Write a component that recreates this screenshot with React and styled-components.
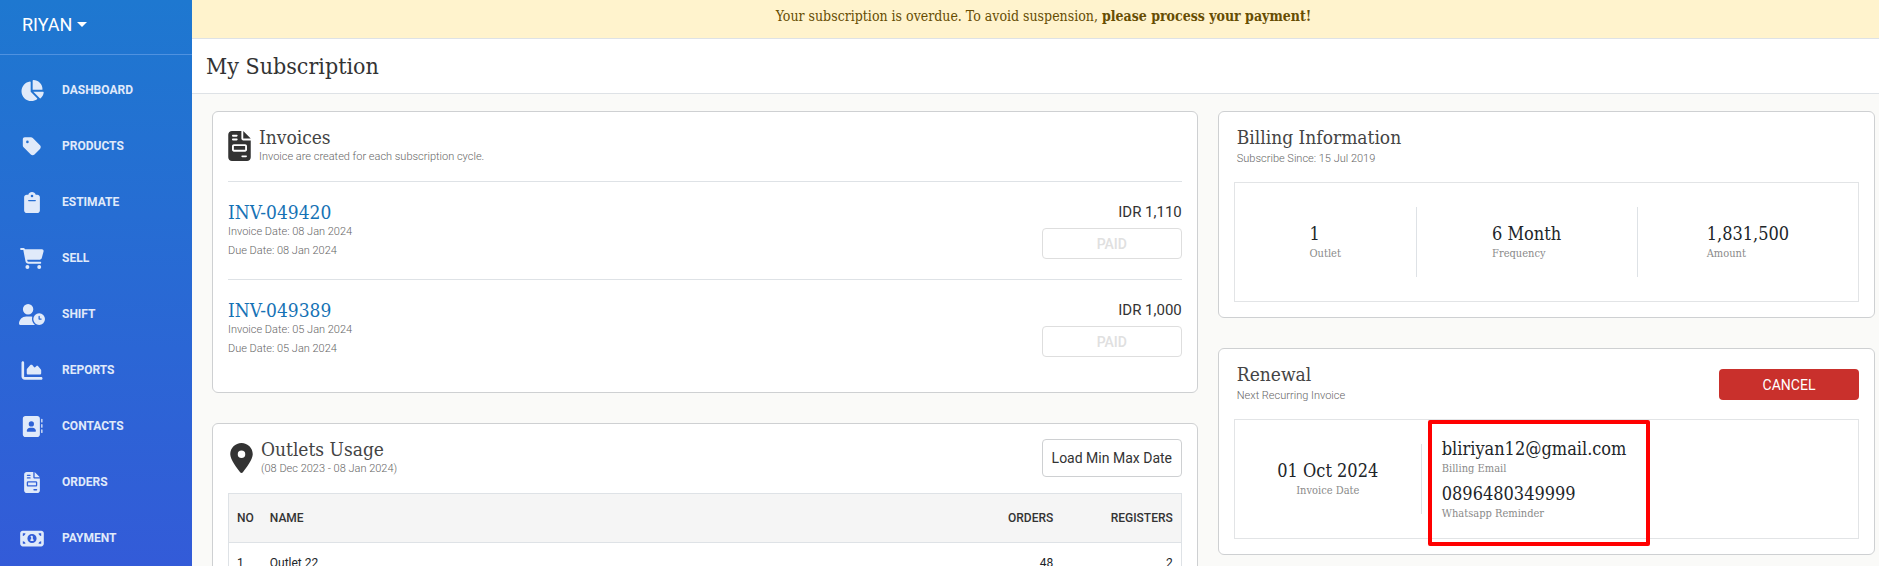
import React from 'react'
import styled, { createGlobalStyle } from 'styled-components';
import {
    FaChartPie, FaTag, FaClipboard, FaCartShopping, FaUserClock, FaChartArea,
    FaAddressBook, FaFileInvoice, FaMoneyBill1, FaLocationDot
} from 'react-icons/fa6';

const menu = [
    { label: 'DASHBOARD', icon: FaChartPie },
    { label: 'PRODUCTS', icon: FaTag },
    { label: 'ESTIMATE', icon: FaClipboard },
    { label: 'SELL', icon: FaCartShopping },
    { label: 'SHIFT', icon: FaUserClock },
    { label: 'REPORTS', icon: FaChartArea },
    { label: 'CONTACTS', icon: FaAddressBook },
    { label: 'ORDERS', icon: FaFileInvoice },
    { label: 'PAYMENT', icon: FaMoneyBill1 },
];

const invoices = [
    { no: 'INV-049420', date: '08 Jan 2024', due: '08 Jan 2024', total: 'IDR 1,110' },
    { no: 'INV-049389', date: '05 Jan 2024', due: '05 Jan 2024', total: 'IDR 1,000' },
];

const billing = [
    { value: '1', label: 'Outlet' },
    { value: '6 Month', label: 'Frequency' },
    { value: '1,831,500', label: 'Amount' },
];

const outlets = [
    { name: 'Outlet 22', orders: 48, registers: 2 },
];

export default function App() {
    return (
        <Page>
            <GlobalStyle />
            <Sidebar>
                <Account type="button">RIYAN <Caret /></Account>
                <Menu>
                    {menu.map(({ label, icon: Icon }) => (
                        <MenuLink href="#" key={label}>
                            <MenuIcon><Icon /></MenuIcon>
                            {label}
                        </MenuLink>
                    ))}
                </Menu>
            </Sidebar>
            <Main>
                <Alert>
                    Your subscription is overdue. To avoid suspension, <b>please process your payment!</b>
                </Alert>
                <TitleBar>
                    <h1>My Subscription</h1>
                </TitleBar>
                <Columns>
                    <Column>
                        <InvoiceCard />
                        <OutletCard />
                    </Column>
                    <Column>
                        <BillingCard />
                        <RenewalCard />
                    </Column>
                </Columns>
            </Main>
        </Page>
    )
}

function InvoiceCard() {
    return (
        <Card>
            <CardHead>
                <HeadIcon><FaFileInvoice /></HeadIcon>
                <div>
                    <CardTitle>Invoices</CardTitle>
                    <Small>Invoice are created for each subscription cycle.</Small>
                </div>
            </CardHead>
            {invoices.map((inv) => (
                <Invoice key={inv.no}>
                    <div>
                        <InvoiceLink href="#">{inv.no}</InvoiceLink>
                        <Small $line={19}>Invoice Date: {inv.date}</Small>
                        <Small $line={19}>Due Date: {inv.due}</Small>
                    </div>
                    <InvoiceTotal>
                        {inv.total}
                        <PaidButton type="button" disabled>PAID</PaidButton>
                    </InvoiceTotal>
                </Invoice>
            ))}
        </Card>
    )
}

function OutletCard() {
    return (
        <Card>
            <CardHead>
                <PinIcon><FaLocationDot /></PinIcon>
                <div>
                    <CardTitle>Outlets Usage</CardTitle>
                    <Small>(08 Dec 2023 - 08 Jan 2024)</Small>
                </div>
                <LoadButton type="button">Load Min Max Date</LoadButton>
            </CardHead>
            <Table>
                <thead>
                    <tr>
                        <Th $width={32}>NO</Th>
                        <Th>NAME</Th>
                        <Th $width={120} $right>ORDERS</Th>
                        <Th $width={120} $right>REGISTERS</Th>
                    </tr>
                </thead>
                <tbody>
                    {outlets.map((o, i) => (
                        <tr key={o.name}>
                            <Td>{i + 1}</Td>
                            <Td>{o.name}</Td>
                            <Td $right>{o.orders}</Td>
                            <Td $right>{o.registers}</Td>
                        </tr>
                    ))}
                </tbody>
            </Table>
        </Card>
    )
}

function BillingCard() {
    return (
        <Card>
            <SideHead>
                <div>
                    <CardTitle>Billing Information</CardTitle>
                    <Small $line={20}>Subscribe Since: 15 Jul 2019</Small>
                </div>
            </SideHead>
            <Box>
                {billing.map((item) => (
                    <Cell key={item.label}>
                        <div>
                            <Value>{item.value}</Value>
                            <Caption>{item.label}</Caption>
                        </div>
                    </Cell>
                ))}
            </Box>
        </Card>
    )
}

function RenewalCard() {
    return (
        <Card>
            <SideHead>
                <div>
                    <CardTitle>Renewal</CardTitle>
                    <Small $line={20}>Next Recurring Invoice</Small>
                </div>
                <CancelButton type="button">CANCEL</CancelButton>
            </SideHead>
            <Box>
                <DateCell>
                    <Value>01 Oct 2024</Value>
                    <Caption>Invoice Date</Caption>
                </DateCell>
                <Contact>
                    <Value>bliriyan12@gmail.com</Value>
                    <Caption>Billing Email</Caption>
                    <Value $top={5}>0896480349999</Value>
                    <Caption>Whatsapp Reminder</Caption>
                    <Highlight />
                </Contact>
            </Box>
        </Card>
    )
}

const slab = '"Roboto Slab", "DejaVu Serif Condensed", "DejaVu Serif", serif';

const GlobalStyle = createGlobalStyle`
    * {
        box-sizing: border-box;
    }
    body {
        margin: 0;
        background: #fafaf8;
        color: #212529;
        font-family: Roboto, sans-serif;
        overflow: hidden;
    }
    h1, h2 {
        margin: 0;
        font-weight: 400;
    }
    button {
        font-family: inherit;
    }
    a {
        text-decoration: none;
    }
`

const Page = styled.div`
    display: flex;
    height: 100vh;
`

const Sidebar = styled.aside`
    flex: 0 0 192px;
    background: linear-gradient(180deg, #1e78d0, #335bd8);
    overflow: hidden;
`

const Account = styled.button`
    display: flex;
    align-items: center;
    gap: 5px;
    width: 100%;
    height: 55px;
    padding: 0 22px 6px;
    border: 0;
    border-bottom: 1px solid #4f92e0;
    background: transparent;
    color: #fff;
    font-size: 18px;
`

const Caret = styled.span`
    border: 5px solid transparent;
    border-top-color: #fff;
    border-bottom: 0;
`

const Menu = styled.nav`
    padding-top: 7px;
`

const MenuLink = styled.a`
    display: flex;
    align-items: center;
    gap: 17px;
    height: 56px;
    padding-left: 19px;
    color: #e0eafa;
    font-size: 12px;
    font-weight: 700;
`

const MenuIcon = styled.span`
    display: flex;
    width: 26px;

    svg {
        width: 26px;
        height: 21px;
    }
`

const Main = styled.main`
    flex: 1;
    min-width: 0;
    overflow: hidden;
`

const Alert = styled.div`
    height: 39px;
    padding-left: 16px;
    border-bottom: 1px solid #dee2e6;
    background: #fff3cd;
    color: #664d03;
    font-family: ${slab};
    font-size: 14px;
    line-height: 32px;
    text-align: center;
`

const TitleBar = styled.header`
    display: flex;
    align-items: center;
    height: 55px;
    padding: 0 14px;
    border-bottom: 1px solid #dee2e6;
    background: #fff;
    color: #333;

    h1 {
        font-family: ${slab};
        font-size: 23px;
    }
`

const Columns = styled.div`
    display: grid;
    grid-template-columns: 3fr 2fr;
    gap: 20px;
    align-items: start;
    padding: 17px 4px 0 20px;
`

const Column = styled.div`
    display: flex;
    flex-direction: column;
    gap: 30px;
    min-width: 0;
`

const Card = styled.section`
    padding: 15px;
    border: 1px solid #ced0d2;
    border-radius: 6px;
    background: #fff;
`

const CardHead = styled.header`
    display: flex;
    gap: 8px;
    height: 54px;
`

const SideHead = styled(CardHead)`
    justify-content: space-between;
    height: 55px;
    padding-left: 3px;
`

const HeadIcon = styled.span`
    padding-top: 4px;
    color: #333;

    svg {
        display: block;
        width: 23px;
        height: 30px;
    }
`

const PinIcon = styled(HeadIcon)`
    padding-left: 2px;
`

const CardTitle = styled.h2`
    padding-bottom: 2px;
    color: #444;
    font-family: ${slab};
    font-size: 19px;
    line-height: 20px;
`

const Small = styled.div`
    color: #666;
    font-size: 11px;
    font-weight: 300;
    line-height: ${(p) => p.$line || 16}px;
`

const Invoice = styled.div`
    display: flex;
    justify-content: space-between;
    height: 98px;
    padding-top: 20px;
    border-top: 1px solid #dee2e6;
`

const InvoiceLink = styled.a`
    display: block;
    color: #1672b5;
    font-family: ${slab};
    font-size: 19px;
    line-height: 20px;
`

const InvoiceTotal = styled.div`
    display: flex;
    flex-direction: column;
    align-items: flex-end;
    gap: 6px;
    color: #333;
    font-size: 15px;
    line-height: 20px;
`

const BaseButton = styled.button`
    width: 140px;
    height: 31px;
    padding: 0;
    border-radius: 4px;
    font-size: 14px;
`

const PaidButton = styled(BaseButton)`
    border: 1px solid #dedede;
    background: #fff;
    color: #e0e0e0;
    font-weight: 500;
`

const CancelButton = styled(BaseButton)`
    margin-top: 5px;
    border: 0;
    background: #c9302c;
    color: #fff;
`

const LoadButton = styled(BaseButton)`
    height: 38px;
    margin-left: auto;
    border: 1px solid #ced0d2;
    background: #fff;
    color: #333;
`

const Table = styled.table`
    width: 100%;
    border: 1px solid #dee2e6;
    border-collapse: collapse;
    font-size: 12px;
`

const Th = styled.th`
    width: ${(p) => (p.$width ? p.$width + 'px' : 'auto')};
    height: 49px;
    padding: 0 8px;
    border-bottom: 1px solid #dee2e6;
    background: #f5f5f5;
    color: #333;
    font-weight: 500;
    text-align: ${(p) => (p.$right ? 'right' : 'left')};
`

const Td = styled.td`
    height: 40px;
    padding: 0 8px;
    text-align: ${(p) => (p.$right ? 'right' : 'left')};
`

const Box = styled.div`
    display: flex;
    align-items: center;
    height: 120px;
    border: 1px solid #e2e4e6;
`

const Cell = styled.div`
    display: flex;
    flex: 1;
    align-items: center;
    justify-content: center;
    height: 70px;

    &:first-child {
        flex: 0 0 29%;
    }

    & + & {
        border-left: 1px solid #dee2e6;
    }
`

const DateCell = styled.div`
    display: flex;
    flex: 0 0 30%;
    flex-direction: column;
    align-items: center;
    justify-content: center;
    height: 70px;
    border-right: 1px solid #dee2e6;
`

const Contact = styled.div`
    position: relative;
    padding: 0 20px;
`

const Value = styled.div`
    margin-top: ${(p) => p.$top || 0}px;
    font-family: ${slab};
    font-size: 18px;
    line-height: 24px;
`

const Caption = styled.div`
    color: #8a8a8a;
    font-family: ${slab};
    font-size: 11px;
    line-height: 16px;
`

const Highlight = styled.span`
    position: absolute;
    inset: -17px -4px -24px 6px;
    border: 4px solid #f00;
    border-radius: 2px;
`
